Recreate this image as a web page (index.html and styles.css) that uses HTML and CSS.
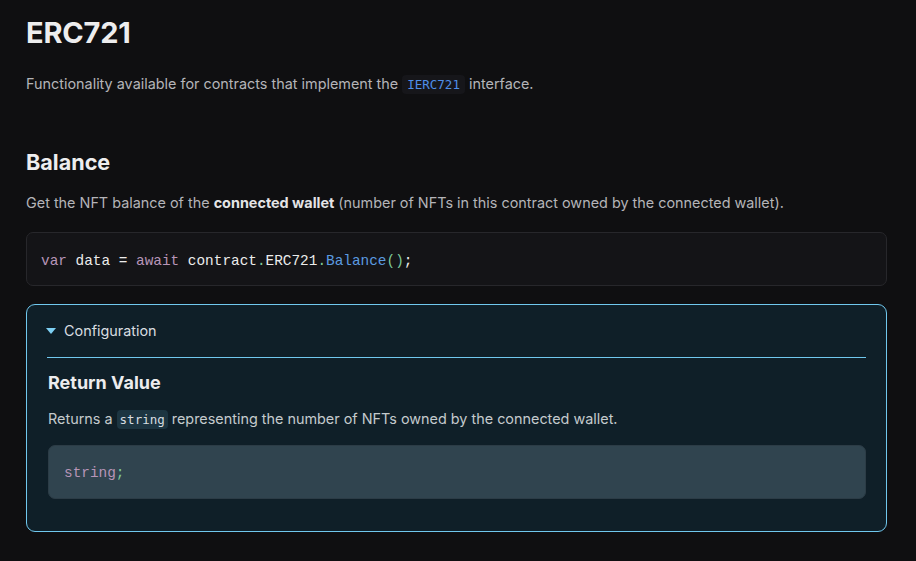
FILE: index.html
```html
<!DOCTYPE html>
<html lang="en">
<head>
<meta charset="utf-8">
<title>ERC721</title>
<link rel="stylesheet" href="styles.css">
</head>
<body>
<main class="doc">
  <h1 class="title">ERC721</h1>
  <p class="lead">Functionality available for contracts that implement the <code class="inline-link">IERC721</code> interface.</p>

  <h2 class="section">Balance</h2>
  <p class="text">Get the NFT balance of the <strong>connected wallet</strong> (number of NFTs in this contract owned by the connected wallet).</p>

  <pre class="code"><span class="kw">var</span> data = <span class="kw">await</span> contract<span class="pn">.</span>ERC721<span class="pn">.</span><span class="fn">Balance</span><span class="pn">()</span>;</pre>

  <details class="config" open>
    <summary class="config-summary"><span class="caret"></span>Configuration</summary>
    <div class="config-body">
      <h3 class="sub">Return Value</h3>
      <p class="text">Returns a <code class="inline">string</code> representing the number of NFTs owned by the connected wallet.</p>
      <pre class="code code-inner"><span class="kw">string</span><span class="pn">;</span></pre>
    </div>
  </details>
</main>
</body>
</html>
```

FILE: styles.css
```css
html, body {
  margin: 0;
  padding: 0;
  background: #0f0f11;
}

body {
  font-family: Inter, "Noto Sans", sans-serif;
  color: #b4b4b8;
  font-size: 14.4px;
  line-height: 20px;
}

.doc {
  width: 861px;
  padding: 14px 0 0 26px;
}

.title {
  margin: 0;
  font-size: 29px;
  line-height: 38px;
  font-weight: 700;
  color: #ededee;
  letter-spacing: -0.2px;
}

.lead {
  margin: 22px 0 0;
}

.inline-link {
  font-family: "DejaVu Sans Mono", monospace;
  font-size: 12.5px;
  color: #4f8fe8;
  background: #16161a;
  padding: 2px 5px;
  border-radius: 4px;
}

.section {
  margin: 53px 0 0;
  font-size: 21.6px;
  line-height: 28px;
  font-weight: 700;
  color: #ededee;
}

.text {
  margin: 0;
}

.section + .text {
  margin-top: 17px;
}

.text strong {
  color: #e4e4e6;
  font-weight: 700;
}

.code {
  margin: 19px 0 0;
  padding: 18px 14px 14px;
  background: #141417;
  border: 1px solid #27272b;
  border-radius: 7px;
  font-family: "Liberation Mono", monospace;
  font-size: 14.4px;
  line-height: 20px;
  color: #ececec;
}

.kw { color: #b795b8; }
.pn { color: #7ec89a; }
.fn { color: #5b9be0; }

.config {
  margin-top: 18px;
  border: 1px solid #70c8ee;
  border-radius: 9px;
  background: #0f1f28;
  padding: 0 20px 32px;
}

.config-summary {
  list-style: none;
  display: flex;
  align-items: center;
  gap: 8px;
  padding: 16px 0;
  color: #d8dde0;
  border-bottom: 1px solid #70c8ee;
  cursor: pointer;
}

.config-summary::-webkit-details-marker { display: none; }

.caret {
  width: 0;
  height: 0;
  border-left: 5px solid transparent;
  border-right: 5px solid transparent;
  border-top: 6px solid #7dd0f4;
  margin-left: -1px;
}

.config-body {
  padding-left: 1px;
}

.sub {
  margin: 13px 0 0;
  font-size: 18px;
  line-height: 24px;
  font-weight: 700;
  color: #ececee;
}

.sub + .text {
  margin-top: 14px;
  color: #c4cacd;
}

.inline {
  font-family: "DejaVu Sans Mono", monospace;
  font-size: 12.5px;
  color: #d6dde0;
  background: #1c3541;
  padding: 2px 3px;
  border-radius: 4px;
}

.code-inner {
  margin-top: 15px;
  background: #30444f;
  border-color: #2c3c46;
  padding: 17px 15px 15px;
}
```
